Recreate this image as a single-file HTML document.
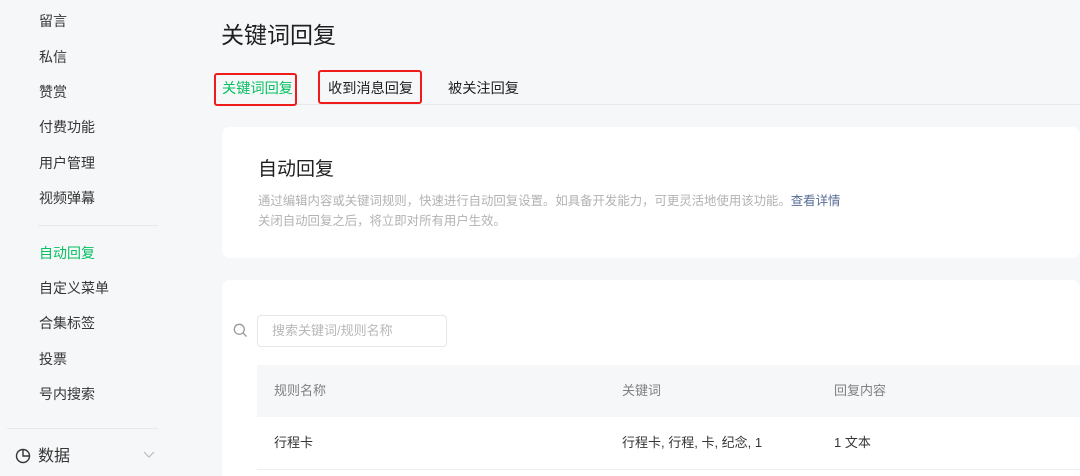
<!DOCTYPE html>
<html><head><meta charset="utf-8"><style>
*{margin:0;padding:0;box-sizing:border-box}
html,body{width:1080px;height:476px;overflow:hidden}
body{background:#f6f7f9;font-family:"Liberation Sans","Noto Sans CJK SC",sans-serif;position:relative;color:#353535}
.a{position:absolute;white-space:nowrap}
.si{left:39px;font-size:14px;color:#353535;line-height:20px}
.card{position:absolute;background:#fff;border-radius:8px;left:222px;width:858px}
.box{position:absolute;border:2px solid #f01c1c;border-radius:3px}
</style></head><body>
<div class="a si" style="top:11px">留言</div>
<div class="a si" style="top:47px">私信</div>
<div class="a si" style="top:82px">赞赏</div>
<div class="a si" style="top:117px">付费功能</div>
<div class="a si" style="top:153px">用户管理</div>
<div class="a si" style="top:188px">视频弹幕</div>
<div class="a" style="left:38px;top:225px;width:120px;height:1px;background:#e7e8ea"></div>
<div class="a si" style="top:243px;color:#07c160">自动回复</div>
<div class="a si" style="top:278px">自定义菜单</div>
<div class="a si" style="top:313px">合集标签</div>
<div class="a si" style="top:349px">投票</div>
<div class="a si" style="top:384px">号内搜索</div>
<div class="a" style="left:7px;top:428px;width:151px;height:1px;background:#e7e8ea"></div>
<svg class="a" style="left:15px;top:448px" width="16" height="16" viewBox="0 0 16 16" fill="none" stroke="#353535" stroke-width="1.4"><circle cx="8" cy="8" r="6.5"/><path d="M8 1.5V8H14.5"/></svg>
<div class="a" style="left:38px;top:446px;font-size:16px;line-height:22px">数据</div>
<svg class="a" style="left:142px;top:450px" width="14" height="10" viewBox="0 0 14 10" fill="none" stroke="#b5b5b5" stroke-width="1"><path d="M2 2L7 7L12 2"/></svg>

<div class="a" style="left:221px;top:19px;font-size:23px;line-height:32px;color:#1f1f1f">关键词回复</div>
<div class="a" style="left:215px;top:104px;width:865px;height:1px;background:#e7e8ea"></div>
<div class="a" style="left:222px;top:79px;font-size:14.2px;line-height:20px;color:#07c160">关键词回复</div>
<div class="a" style="left:328px;top:79px;font-size:14.2px;line-height:20px;color:#1f1f1f">收到消息回复</div>
<div class="a" style="left:448px;top:79px;font-size:14.2px;line-height:20px;color:#1f1f1f">被关注回复</div>
<div class="box" style="left:214px;top:73px;width:83px;height:33px"></div>
<div class="box" style="left:318px;top:70px;width:104px;height:34px"></div>

<div class="card" style="top:127px;height:131px"></div>
<div class="a" style="left:258px;top:157px;font-size:19px;line-height:26px;color:#1f1f1f">自动回复</div>
<div class="a" style="left:258px;top:192px;font-size:12.4px;line-height:18px;color:#b2b2b2">通过编辑内容或关键词规则，快速进行自动回复设置。如具备开发能力，可更灵活地使用该功能。<span style="color:#576b95">查看详情</span></div>
<div class="a" style="left:258px;top:212px;font-size:12.4px;line-height:18px;color:#b2b2b2">关闭自动回复之后，将立即对所有用户生效。</div>

<div class="card" style="top:280px;height:196px;border-radius:8px 8px 0 0"></div>
<svg class="a" style="left:233px;top:323px" width="15" height="15" viewBox="0 0 15 15" fill="none" stroke="#9a9a9a" stroke-width="1.3"><circle cx="6.3" cy="6.3" r="5"/><path d="M10 10L13.5 13.5"/></svg>
<div class="a" style="left:257px;top:315px;width:190px;height:32px;border:1px solid #e4e6e9;border-radius:4px"></div>
<div class="a" style="left:272px;top:322px;font-size:13px;line-height:18px;color:#b8b8b8">搜索关键词/规则名称</div>
<div class="a" style="left:257px;top:365px;width:823px;height:52px;background:#f6f7f9"></div>
<div class="a" style="left:274px;top:382px;font-size:13px;line-height:18px;color:#808080">规则名称</div>
<div class="a" style="left:622px;top:382px;font-size:13px;line-height:18px;color:#808080">关键词</div>
<div class="a" style="left:834px;top:382px;font-size:13px;line-height:18px;color:#808080">回复内容</div>
<div class="a" style="left:274px;top:434px;font-size:13px;line-height:18px;color:#353535">行程卡</div>
<div class="a" style="left:622px;top:434px;font-size:13px;line-height:18px;color:#353535">行程卡, 行程, 卡, 纪念, 1</div>
<div class="a" style="left:834px;top:434px;font-size:13px;line-height:18px;color:#353535">1 文本</div>
<div class="a" style="left:257px;top:469px;width:823px;height:1px;background:#eeeff1"></div>
</body></html>
